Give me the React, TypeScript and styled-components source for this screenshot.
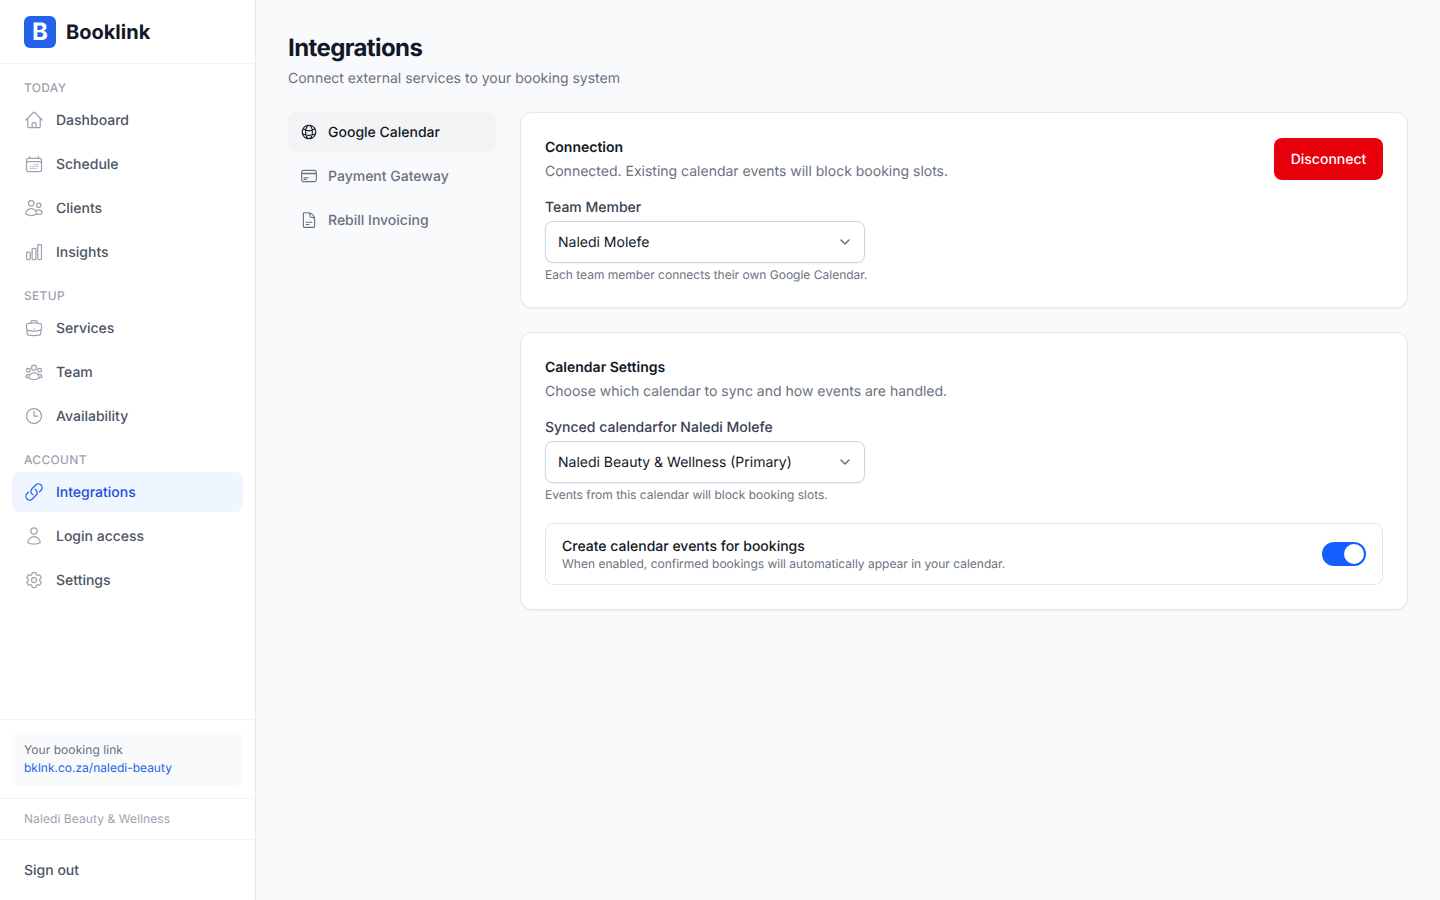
import { createGlobalStyle, styled } from 'styled-components'
import type { IconType } from 'react-icons'
import {
  HiOutlineBriefcase,
  HiOutlineCalendarDays,
  HiOutlineChartBar,
  HiOutlineClock,
  HiOutlineCog6Tooth,
  HiOutlineCreditCard,
  HiOutlineDocumentText,
  HiOutlineGlobeAlt,
  HiOutlineHome,
  HiOutlineLink,
  HiOutlineUser,
  HiOutlineUserGroup,
  HiOutlineUsers,
} from 'react-icons/hi2'

interface NavEntry {
  label: string
  icon: IconType
  active?: boolean
}

const NAV_SECTIONS: { title: string; items: NavEntry[] }[] = [
  {
    title: 'TODAY',
    items: [
      { label: 'Dashboard', icon: HiOutlineHome },
      { label: 'Schedule', icon: HiOutlineCalendarDays },
      { label: 'Clients', icon: HiOutlineUsers },
      { label: 'Insights', icon: HiOutlineChartBar },
    ],
  },
  {
    title: 'SETUP',
    items: [
      { label: 'Services', icon: HiOutlineBriefcase },
      { label: 'Team', icon: HiOutlineUserGroup },
      { label: 'Availability', icon: HiOutlineClock },
    ],
  },
  {
    title: 'ACCOUNT',
    items: [
      { label: 'Integrations', icon: HiOutlineLink, active: true },
      { label: 'Login access', icon: HiOutlineUser },
      { label: 'Settings', icon: HiOutlineCog6Tooth },
    ],
  },
]

const SUB_NAV: NavEntry[] = [
  { label: 'Google Calendar', icon: HiOutlineGlobeAlt, active: true },
  { label: 'Payment Gateway', icon: HiOutlineCreditCard },
  { label: 'Rebill Invoicing', icon: HiOutlineDocumentText },
]

const GlobalStyle = createGlobalStyle`
  * {
    box-sizing: border-box;
  }

  body {
    margin: 0;
    background: #f9fafb;
    color: #111827;
    font-family: Inter, 'Liberation Sans', sans-serif;
    text-rendering: geometricPrecision;
    -webkit-font-smoothing: antialiased;
  }
`

const Page = styled.div`
  display: flex;
  height: 900px;
  overflow: hidden;
`

const Sidebar = styled.aside`
  width: 256px;
  flex-shrink: 0;
  display: flex;
  flex-direction: column;
  background: #ffffff;
  border-right: 1px solid #e5e7eb;
`

const Brand = styled.div`
  height: 64px;
  flex-shrink: 0;
  display: flex;
  align-items: center;
  gap: 10px;
  padding: 0 24px;
  border-bottom: 1px solid #f3f4f6;
`

const LogoMark = styled.div`
  width: 32px;
  height: 32px;
  border-radius: 6px;
  background: #2563eb;
  color: #ffffff;
  display: flex;
  align-items: center;
  justify-content: center;
  font-size: 24px;
  font-weight: 700;
`

const BrandName = styled.span`
  font-size: 20px;
  font-weight: 700;
  color: #111827;
`

const Nav = styled.nav`
  flex: 1;
  display: flex;
  flex-direction: column;
  gap: 16px;
  padding: 16px 12px 0;
`

const NavSection = styled.div`
  display: flex;
  flex-direction: column;
  gap: 4px;
`

const SectionTitle = styled.div`
  padding: 0 12px;
  font-size: 12px;
  line-height: 16px;
  font-weight: 500;
  letter-spacing: 0.3px;
  color: #9ca3af;
`

const NavItem = styled.a<{ $active?: boolean }>`
  height: 40px;
  display: flex;
  align-items: center;
  gap: 12px;
  padding: 0 12px;
  border-radius: 8px;
  font-size: 14px;
  font-weight: 500;
  background: ${(p) => (p.$active ? '#eff6ff' : 'transparent')};
  color: ${(p) => (p.$active ? '#1d4ed8' : '#4b5563')};

  svg {
    width: 20px;
    height: 20px;
    flex-shrink: 0;
    color: ${(p) => (p.$active ? '#2563eb' : '#9ca3af')};
  }
`

const LinkBlock = styled.div`
  padding: 12px;
  border-top: 1px solid #f3f4f6;
`

const LinkCard = styled.div`
  height: 54px;
  padding: 9px 12px;
  border-radius: 8px;
  background: #f9fafb;
  font-size: 12px;
  line-height: 18px;
`

const LinkLabel = styled.div`
  letter-spacing: 0.06px;
  color: #6b7280;
`

const LinkUrl = styled.div`
  color: #2563eb;
`

const BusinessName = styled.div`
  height: 41px;
  display: flex;
  align-items: center;
  padding: 0 24px 1px;
  border-top: 1px solid #f3f4f6;
  font-size: 12px;
  letter-spacing: 0.08px;
  color: #9ca3af;
`

const SignOut = styled.div`
  height: 61px;
  display: flex;
  align-items: center;
  padding: 0 24px;
  border-top: 1px solid #f3f4f6;
  font-size: 14px;
  font-weight: 500;
  color: #4b5563;
`

const Main = styled.main`
  flex: 1;
  padding: 32px;
`

const Title = styled.h1`
  margin: 0;
  font-size: 24px;
  line-height: 32px;
  font-weight: 700;
  letter-spacing: -0.6px;
  color: #111827;
`

const Subtitle = styled.p`
  margin: 5px 0 0;
  font-size: 14px;
  line-height: 20px;
  color: #6b7280;
`

const Columns = styled.div`
  display: flex;
  gap: 24px;
  margin-top: 23px;
  align-items: flex-start;
`

const SubNav = styled.div`
  width: 208px;
  flex-shrink: 0;
  display: flex;
  flex-direction: column;
  gap: 4px;
`

const SubNavItem = styled.a<{ $active?: boolean }>`
  height: 40px;
  display: flex;
  align-items: center;
  gap: 10px;
  padding: 0 12px;
  border-radius: 8px;
  font-size: 14px;
  font-weight: 500;
  background: ${(p) => (p.$active ? '#f3f4f6' : 'transparent')};
  color: ${(p) => (p.$active ? '#111827' : '#6b7280')};

  svg {
    width: 18px;
    height: 18px;
    flex-shrink: 0;
  }
`

const Panels = styled.div`
  flex: 1;
  display: flex;
  flex-direction: column;
  gap: 24px;
`

const Card = styled.section`
  padding: 25px 24px 24px;
  background: #ffffff;
  border: 1px solid #e5e7eb;
  border-radius: 12px;
  box-shadow: 0 1px 2px rgba(0, 0, 0, 0.05);
`

const CardHead = styled.div`
  display: flex;
  justify-content: space-between;
  align-items: flex-start;
`

const CardTitle = styled.h2`
  margin: 0;
  font-size: 14px;
  line-height: 20px;
  font-weight: 600;
  color: #111827;
`

const CardText = styled.p`
  margin: 4px 0 0;
  font-size: 14px;
  line-height: 20px;
  color: #6b7280;
`

const DangerButton = styled.button`
  width: 109px;
  height: 42px;
  padding: 0;
  border: 0;
  border-radius: 8px;
  background: #e7000b;
  color: #ffffff;
  font-family: inherit;
  font-size: 14px;
  font-weight: 500;
  text-rendering: inherit;
`

const Field = styled.div`
  margin-top: 16px;
`

const FieldLabel = styled.div`
  font-size: 14px;
  line-height: 20px;
  font-weight: 500;
  color: #374151;
`

const Select = styled.div`
  width: 320px;
  height: 42px;
  margin-top: 3px;
  display: flex;
  align-items: center;
  justify-content: space-between;
  padding: 0 9px 0 12px;
  background: #ffffff;
  border: 1px solid #d1d5db;
  border-radius: 8px;
  box-shadow: 0 1px 2px rgba(0, 0, 0, 0.05);
  font-size: 14px;
  color: #111827;
`

const Chevron = styled.svg`
  width: 20px;
  height: 20px;
  fill: none;
  stroke: #6b7280;
  stroke-width: 1.5;
  stroke-linecap: round;
  stroke-linejoin: round;
`

const Hint = styled.div`
  margin-top: 4px;
  font-size: 12px;
  line-height: 16px;
  color: #6b7280;
`

const ToggleRow = styled.div`
  margin-top: 20px;
  height: 62px;
  display: flex;
  align-items: center;
  justify-content: space-between;
  padding: 0 16px;
  border: 1px solid #e5e7eb;
  border-radius: 8px;
`

const ToggleCopy = styled.div`
  padding-top: 2px;
`

const ToggleTitle = styled.div`
  font-size: 14px;
  line-height: 18px;
  font-weight: 500;
  color: #111827;
`

const ToggleText = styled.div`
  font-size: 12px;
  line-height: 16px;
  color: #6b7280;
`

const Toggle = styled.div`
  width: 44px;
  height: 24px;
  padding: 2px;
  display: flex;
  justify-content: flex-end;
  border-radius: 12px;
  background: #155dfc;
`

const Knob = styled.div`
  width: 20px;
  height: 20px;
  border-radius: 50%;
  background: #ffffff;
`

function SelectChevron() {
  return (
    <Chevron viewBox="0 0 20 20">
      <path d="M6 8l4 4 4-4" />
    </Chevron>
  )
}

export default function App() {
  return (
    <>
      <GlobalStyle />
      <Page>
        <Sidebar>
          <Brand>
            <LogoMark>B</LogoMark>
            <BrandName>Booklink</BrandName>
          </Brand>
          <Nav>
            {NAV_SECTIONS.map((section) => (
              <NavSection key={section.title}>
                <SectionTitle>{section.title}</SectionTitle>
                {section.items.map((item) => (
                  <NavItem key={item.label} $active={item.active}>
                    <item.icon />
                    {item.label}
                  </NavItem>
                ))}
              </NavSection>
            ))}
          </Nav>
          <LinkBlock>
            <LinkCard>
              <LinkLabel>Your booking link</LinkLabel>
              <LinkUrl>bklnk.co.za/naledi-beauty</LinkUrl>
            </LinkCard>
          </LinkBlock>
          <BusinessName>Naledi Beauty &amp; Wellness</BusinessName>
          <SignOut>Sign out</SignOut>
        </Sidebar>
        <Main>
          <Title>Integrations</Title>
          <Subtitle>Connect external services to your booking system</Subtitle>
          <Columns>
            <SubNav>
              {SUB_NAV.map((item) => (
                <SubNavItem key={item.label} $active={item.active}>
                  <item.icon />
                  {item.label}
                </SubNavItem>
              ))}
            </SubNav>
            <Panels>
              <Card>
                <CardHead>
                  <div>
                    <CardTitle>Connection</CardTitle>
                    <CardText>Connected. Existing calendar events will block booking slots.</CardText>
                  </div>
                  <DangerButton>Disconnect</DangerButton>
                </CardHead>
                <Field>
                  <FieldLabel>Team Member</FieldLabel>
                  <Select>
                    Naledi Molefe
                    <SelectChevron />
                  </Select>
                  <Hint>Each team member connects their own Google Calendar.</Hint>
                </Field>
              </Card>
              <Card>
                <CardTitle>Calendar Settings</CardTitle>
                <CardText>Choose which calendar to sync and how events are handled.</CardText>
                <Field>
                  <FieldLabel>Synced calendarfor Naledi Molefe</FieldLabel>
                  <Select>
                    Naledi Beauty &amp; Wellness (Primary)
                    <SelectChevron />
                  </Select>
                  <Hint>Events from this calendar will block booking slots.</Hint>
                </Field>
                <ToggleRow>
                  <ToggleCopy>
                    <ToggleTitle>Create calendar events for bookings</ToggleTitle>
                    <ToggleText>When enabled, confirmed bookings will automatically appear in your calendar.</ToggleText>
                  </ToggleCopy>
                  <Toggle>
                    <Knob />
                  </Toggle>
                </ToggleRow>
              </Card>
            </Panels>
          </Columns>
        </Main>
      </Page>
    </>
  )
}
